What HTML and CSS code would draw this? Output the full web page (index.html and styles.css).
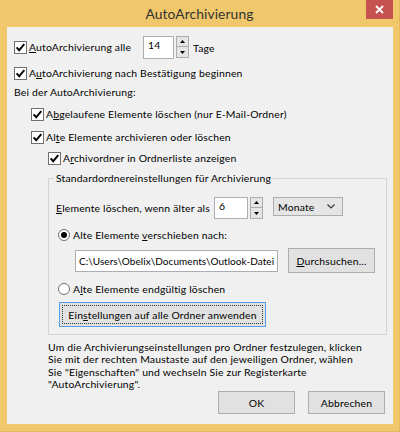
FILE: index.html
```html
<!DOCTYPE html>
<html lang="de">
<head>
<meta charset="utf-8">
<title>AutoArchivierung</title>
<link rel="stylesheet" href="styles.css">
</head>
<body>
<div class="window">
  <div class="titlebar">
    <span></span>
    <div class="title">AutoArchivierung</div>
    <div class="close">
      <svg width="9" height="9" viewBox="0 0 9 9"><path d="M1 1 L8 8 M8 1 L1 8" stroke="#fff" stroke-width="1.8" fill="none"/></svg>
    </div>
  </div>
  <div class="content">
    <div class="row r1">
      <label class="check w129">
        <svg class="cb" viewBox="0 0 13 13"><rect x=".5" y=".5" width="12" height="12" fill="#fff" stroke="#707070"/><path d="M2.6 6.3 L5.2 9.2 L10.3 3.2" fill="none" stroke="#000" stroke-width="1.9"/></svg>
        <span><u>A</u>utoArchivierung alle</span>
      </label>
      <div class="spin">
        <div class="num n14">14</div>
        <div class="arrows">
          <div class="arr"><svg width="5" height="3" viewBox="0 0 5 3"><path d="M0 3 L2.5 0 L5 3Z" fill="#000"/></svg></div>
          <div class="arr"><svg width="5" height="3" viewBox="0 0 5 3"><path d="M0 0 L2.5 3 L5 0Z" fill="#000"/></svg></div>
        </div>
      </div>
      <span class="tage">Tage</span>
    </div>
    <div class="row r2">
      <label class="check">
        <svg class="cb" viewBox="0 0 13 13"><rect x=".5" y=".5" width="12" height="12" fill="#fff" stroke="#707070"/><path d="M2.6 6.3 L5.2 9.2 L10.3 3.2" fill="none" stroke="#000" stroke-width="1.9"/></svg>
        <span>A<u>u</u>toArchivierung nach Bestätigung beginnen</span>
      </label>
    </div>
    <div class="plain">Bei der AutoArchivierung:</div>
    <div class="row ind1 r3">
      <label class="check">
        <svg class="cb" viewBox="0 0 13 13"><rect x=".5" y=".5" width="12" height="12" fill="#fff" stroke="#707070"/><path d="M2.6 6.3 L5.2 9.2 L10.3 3.2" fill="none" stroke="#000" stroke-width="1.9"/></svg>
        <span>A<u>b</u>gelaufene Elemente löschen (nur E-Mail-Ordner)</span>
      </label>
    </div>
    <div class="row ind1 r4">
      <label class="check">
        <svg class="cb" viewBox="0 0 13 13"><rect x=".5" y=".5" width="12" height="12" fill="#fff" stroke="#707070"/><path d="M2.6 6.3 L5.2 9.2 L10.3 3.2" fill="none" stroke="#000" stroke-width="1.9"/></svg>
        <span>Al<u>t</u>e Elemente archivieren oder löschen</span>
      </label>
    </div>
    <div class="row ind2 r5">
      <label class="check">
        <svg class="cb" viewBox="0 0 13 13"><rect x=".5" y=".5" width="12" height="12" fill="#fff" stroke="#707070"/><path d="M2.6 6.3 L5.2 9.2 L10.3 3.2" fill="none" stroke="#000" stroke-width="1.9"/></svg>
        <span>A<u>r</u>chivordner in Ordnerliste anzeigen</span>
      </label>
    </div>
    <fieldset class="group">
      <legend>Standardordnereinstellungen für Archivierung</legend>
      <div class="row g1">
        <span class="w158"><u>E</u>lemente löschen, wenn älter als</span>
        <div class="spin">
          <div class="num n6">6</div>
          <div class="arrows">
            <div class="arr"><svg width="5" height="3" viewBox="0 0 5 3"><path d="M0 3 L2.5 0 L5 3Z" fill="#000"/></svg></div>
            <div class="arr"><svg width="5" height="3" viewBox="0 0 5 3"><path d="M0 0 L2.5 3 L5 0Z" fill="#000"/></svg></div>
          </div>
        </div>
        <div class="select">
          <span>Monate</span>
          <svg width="8" height="5" viewBox="0 0 8 5"><path d="M0.5 0.5 L4 4 L7.5 0.5" fill="none" stroke="#333" stroke-width="1.1"/></svg>
        </div>
      </div>
      <div class="row g2">
        <label class="radio">
          <svg class="rb" viewBox="0 0 12 12"><circle cx="6" cy="6" r="5.5" fill="#fff" stroke="#707070"/><circle cx="6" cy="6" r="3" fill="#000"/></svg>
          <span>Alte Elemente <u>v</u>erschieben nach:</span>
        </label>
      </div>
      <div class="row g3">
        <div class="path">C:\Users\Obelix\Documents\Outlook-Datei</div>
        <div class="btn browse"><span><u>D</u>urchsuchen...</span></div>
      </div>
      <div class="row g4">
        <label class="radio">
          <svg class="rb" viewBox="0 0 12 12"><circle cx="6" cy="6" r="5.5" fill="#fff" stroke="#707070"/></svg>
          <span>A<u>l</u>te Elemente endgültig löschen</span>
        </label>
      </div>
      <div class="row g5">
        <div class="btn apply"><span class="focus">Ein<u>s</u>tellungen auf alle Ordner anwenden</span></div>
      </div>
    </fieldset>
    <p class="note">Um die Archivierungseinstellungen pro Ordner festzulegen, klicken<br>Sie mit der rechten Maustaste auf den jeweiligen Ordner, wählen<br>Sie "Eigenschaften" und wechseln Sie zur Registerkarte<br>"AutoArchivierung".</p>
    <div class="buttons">
      <div class="btn dlg">OK</div>
      <div class="btn dlg">Abbrechen</div>
    </div>
  </div>
</div>
</body>
</html>
```
FILE: styles.css
```css
html, body {
  margin: 0;
  padding: 0;
}
body {
  font-family: Lato, "Noto Sans", sans-serif;
  font-size: 10.4px;
  letter-spacing: 0.18px;
  color: #000;
}
.window {
  width: 400px;
  height: 432px;
  background: #f0c86b;
  display: flex;
  flex-direction: column;
  box-sizing: border-box;
  border-right: 1px solid #e3b95b;
  border-bottom: 1px solid #e3b95b;
}
.titlebar {
  height: 27px;
  flex: none;
  display: grid;
  grid-template-columns: 1fr auto 1fr;
  align-items: start;
}
.title {
  font-size: 13.8px;
  letter-spacing: 0.1px;
  line-height: 28px;
  color: #333;
}
.close {
  justify-self: end;
  margin-right: 6px;
  width: 27px;
  height: 19px;
  background: #c75050;
  display: flex;
  align-items: center;
  justify-content: center;
}
.close svg { display: block; }
.content {
  flex: 1;
  margin: 0 6px 7px 7px;
  background: #f0f0f0;
  padding: 9px 6px 0 7px;
  display: flex;
  flex-direction: column;
}
.row {
  display: flex;
  align-items: center;
}
.check, .radio {
  display: flex;
  align-items: center;
  gap: 2px;
  line-height: 13px;
}
.radio { gap: 3px; }
.cb { width: 13px; height: 13px; display: block; flex: none; }
.rb { width: 12px; height: 12px; display: block; flex: none; }
.w129 { width: 129px; }
.w158 { width: 158px; }
.r1 { height: 23px; }
.spin { display: flex; align-items: flex-start; }
.num {
  box-sizing: border-box;
  background: #fff;
  border: 1px solid #abadb3;
  padding: 2px 4px 0;
  line-height: 12px;
}
.n14 { width: 31px; height: 23px; }
.n6 { width: 34px; height: 22px; }
.arrows {
  margin-left: 2px;
  width: 13px;
  display: flex;
  flex-direction: column;
}
.arr {
  box-sizing: border-box;
  height: 11px;
  background: #e5e5e5;
  border: 1px solid #acacac;
  display: flex;
  align-items: center;
  justify-content: center;
}
.arr + .arr { border-top: none; height: 11px; }
.arr svg { display: block; }
.tage { margin-left: 4px; }
.r2 { margin-top: 8px; height: 13px; }
.plain { margin-top: 6px; line-height: 13px; }
.ind1 { padding-left: 17px; }
.ind2 { padding-left: 34px; }
.r3 { margin-top: 9px; height: 13px; }
.r4 { margin-top: 10px; height: 13px; }
.r5 { margin-top: 8px; height: 13px; }
.group {
  margin: 7px 0 0 34px;
  padding: 0 0 7px 7px;
  border: 1px solid #d5d5d5;
  min-width: 0;
}
.group legend {
  padding: 0 2px;
  margin-left: -2px;
  line-height: 12px;
}
.g1 { margin-top: 13px; height: 22px; align-items: flex-start; }
.g1 .w158 { line-height: 22px; }
.select {
  box-sizing: border-box;
  margin-left: 10px;
  width: 70px;
  height: 19px;
  background: #e5e5e5;
  border: 1px solid #acacac;
  display: flex;
  align-items: center;
  justify-content: space-between;
  padding: 0 7px 0 4px;
}
.select svg { display: block; }
.g2 { margin-top: 10px; padding-left: 2px; height: 12px; }
.g3 { margin-top: 7px; padding-left: 19px; height: 25px; }
.path {
  box-sizing: border-box;
  width: 203px;
  height: 22px;
  background: #fff;
  border: 1px solid #abadb3;
  padding: 0 0 0 3px;
  font-size: 10px;
  letter-spacing: 0.06px;
  line-height: 20px;
  white-space: nowrap;
  overflow: hidden;
}
.btn {
  box-sizing: border-box;
  background: #e1e1e1;
  border: 1px solid #adadad;
  display: flex;
  align-items: center;
  justify-content: center;
}
.browse { margin-left: 10px; width: 87px; height: 25px; }
.g4 { margin-top: 10px; padding-left: 2px; height: 12px; }
.g5 { margin-top: 7px; padding-left: 3px; }
.apply {
  width: 207px;
  height: 25px;
  border-color: #569de5;
  padding: 2px;
}
.apply .focus {
  box-sizing: border-box;
  width: 100%;
  height: 100%;
  border: 1px dotted #333;
  display: flex;
  align-items: center;
  justify-content: center;
}
.note {
  margin: 6px 0 0 34px;
  line-height: 12.3px;
}
.buttons {
  margin-top: 1px;
  display: flex;
  justify-content: flex-end;
  gap: 13px;
  padding-right: 2px;
}
.dlg { width: 77px; height: 23px; }
```
